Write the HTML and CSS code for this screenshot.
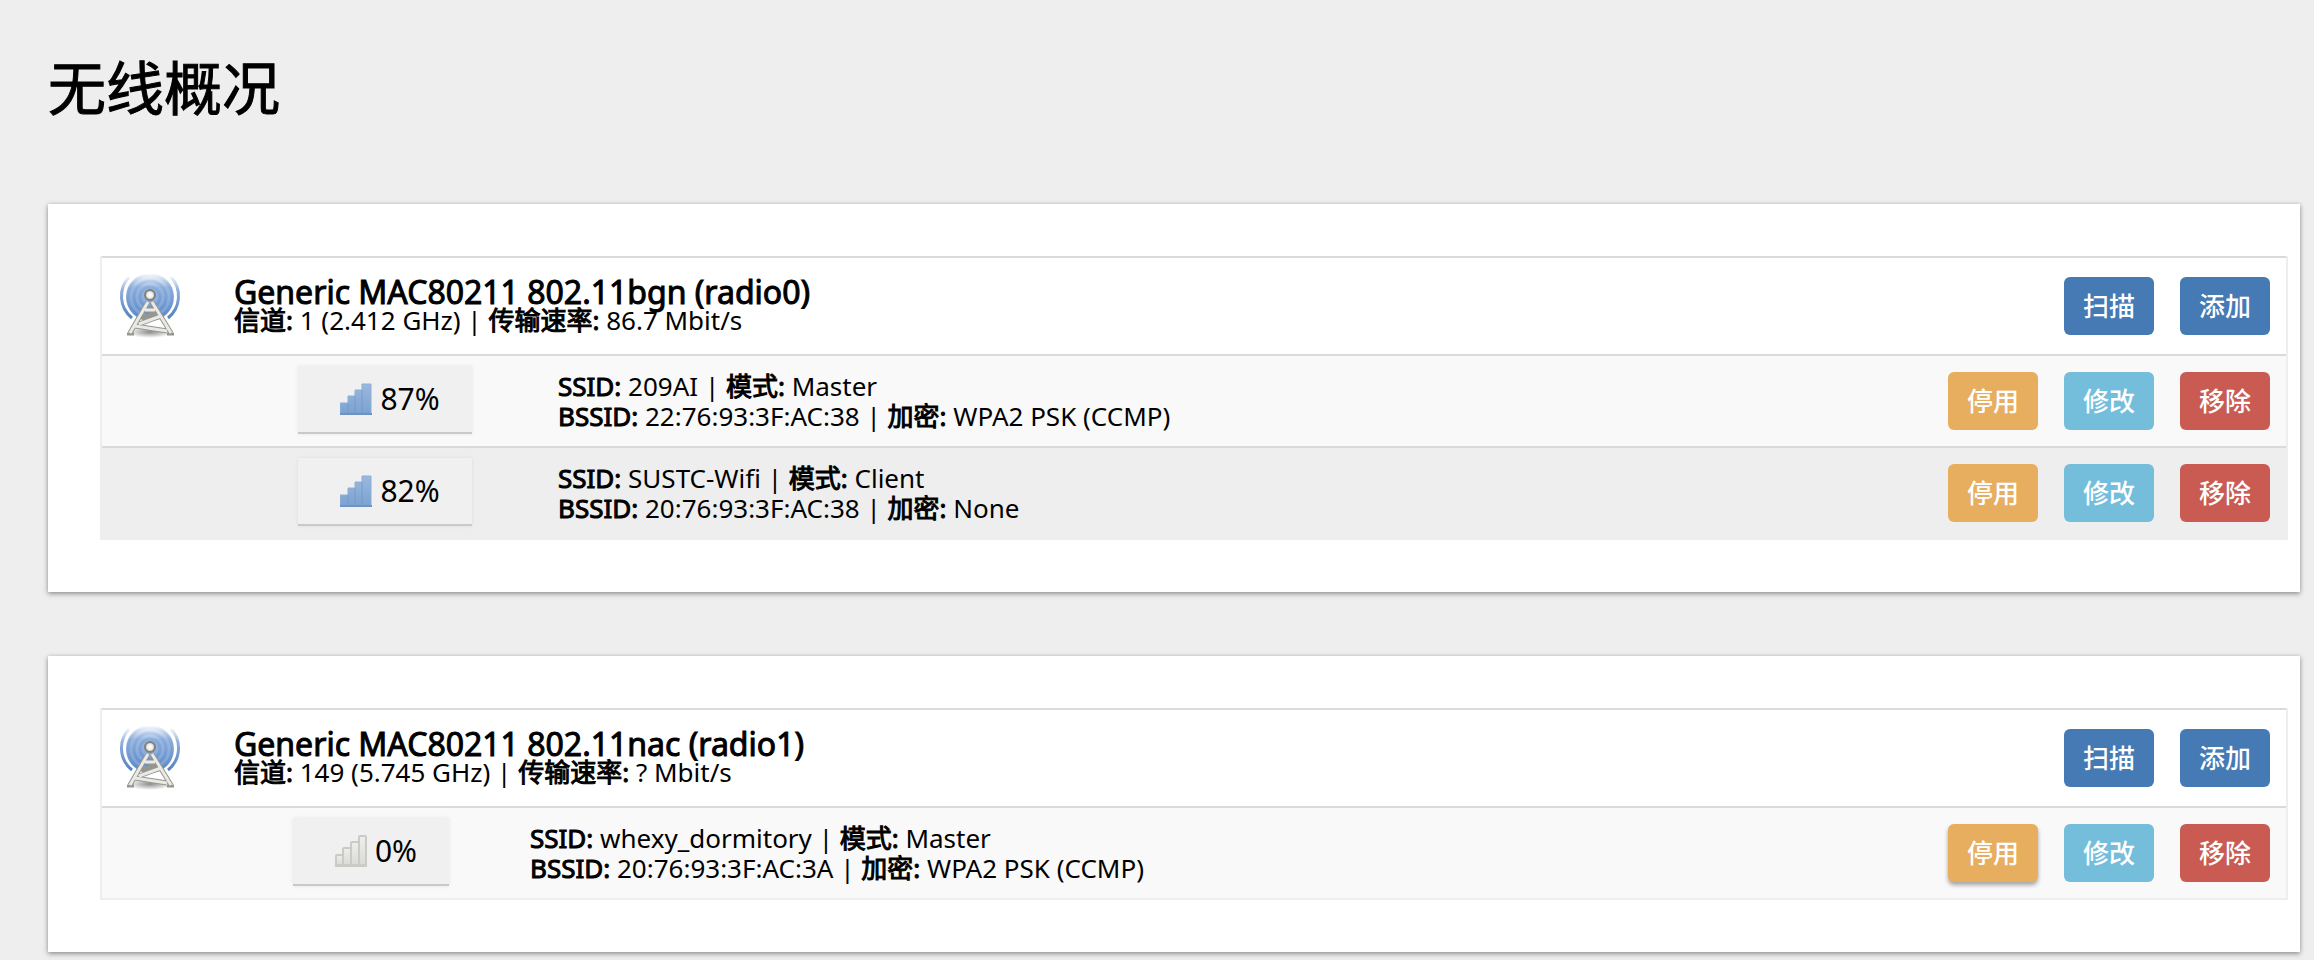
FILE: index.html
```
<!DOCTYPE html>
<html lang="zh-CN">
<head>
<meta charset="utf-8">
<title>无线概况</title>
<link rel="stylesheet" href="styles.css">
</head>
<body>
<svg class="defs" aria-hidden="true">
  <defs>
    <linearGradient id="wave" gradientUnits="userSpaceOnUse" x1="0" y1="0" x2="0" y2="46">
      <stop offset="0" stop-color="#8fb0dc" stop-opacity="0"/>
      <stop offset=".35" stop-color="#7ba0d4" stop-opacity=".85"/>
      <stop offset="1" stop-color="#4f7dbf"/>
    </linearGradient>
    <linearGradient id="haze" x1="0" y1="0" x2="0" y2="1">
      <stop offset="0" stop-color="#a9c3e6" stop-opacity="0"/>
      <stop offset=".3" stop-color="#95b5e0" stop-opacity=".95"/>
      <stop offset="1" stop-color="#7199d3"/>
    </linearGradient>
    <radialGradient id="ball">
      <stop offset="0" stop-color="#fff"/>
      <stop offset=".5" stop-color="#f2f2f0"/>
      <stop offset="1" stop-color="#b4b4b0"/>
    </radialGradient>
    <radialGradient id="ground">
      <stop offset="0" stop-color="#000" stop-opacity=".45"/>
      <stop offset="1" stop-color="#000" stop-opacity="0"/>
    </radialGradient>
    <linearGradient id="bar-on" x1="0" y1="0" x2="0" y2="1">
      <stop offset="0" stop-color="#9ab8de"/>
      <stop offset="1" stop-color="#7ba2d0"/>
    </linearGradient>
    <linearGradient id="bar-off" x1="0" y1="0" x2="0" y2="1">
      <stop offset="0" stop-color="#eeeeec"/>
      <stop offset="1" stop-color="#d9dbd6"/>
    </linearGradient>
    <symbol id="tower" viewBox="0 0 64 64">
      <circle cx="32" cy="23" r="24" fill="url(#haze)"/>
      <g fill="none" stroke="url(#wave)" stroke-width="3">
        <path d="M11 3A28 28 0 0 0 14 44M53 3A28 28 0 0 1 50 44"/>
        <circle cx="32" cy="23" r="22" opacity=".7"/>
        <circle cx="32" cy="23" r="16" opacity=".7"/>
        <circle cx="32" cy="23" r="10" opacity=".7"/>
      </g>
      <ellipse cx="32" cy="58" rx="23" ry="6" fill="url(#ground)"/>
      <g fill="none" stroke="#96968f" stroke-width="5">
        <path d="M30 28L12 59M34 28L53 59M27 36H37M24 45L39 38M21 50L43 42M17 52L49 57"/>
        <path d="M9 60H16M49 60H56" stroke-width="3"/>
      </g>
      <path d="M30 28L12 59M34 28L53 59M27 36H37M21 50L43 42M17 52L49 57" fill="none" stroke="#e9e9e5" stroke-width="3"/>
      <circle cx="32" cy="21" r="5" fill="url(#ball)" stroke="#80807c" stroke-width="2"/>
    </symbol>
    <symbol id="signal-on" viewBox="0 0 32 32">
      <path d="M0 20H8V13H15V7H22V1H31V31H0Z" fill="url(#bar-on)" stroke="#8eafd9" stroke-width="1"/>
      <path d="M8 20V31M15 13V31M22 7V31" stroke="#7095c8" stroke-width="1" opacity=".7"/>
      <rect x="0" y="30" width="32" height="2" fill="#6d93c6"/>
    </symbol>
    <symbol id="signal-off" viewBox="0 0 32 32">
      <rect x="0" y="29" width="32" height="3" fill="#c8cac4"/>
      <g fill="url(#bar-off)" stroke="#cacbc7" stroke-width="2">
        <rect x="1" y="20" width="7" height="10" rx="1"/>
        <rect x="8" y="13" width="8" height="17" rx="1"/>
        <rect x="16" y="7" width="8" height="23" rx="1"/>
        <rect x="24" y="1" width="7" height="29" rx="1"/>
      </g>
    </symbol>
  </defs>
</svg>
<main class="page">
  <h1 class="page-title">无线概况</h1>

  <section class="card">
    <table class="radio">
      <colgroup><col class="col-icon"><col class="col-signal"><col><col class="col-actions"></colgroup>
      <tr class="row row-head">
        <td class="icon-cell"><svg class="tower"><use href="#tower"/></svg></td>
        <td colspan="2">
          <div class="device"><div class="device-name">Generic MAC80211 802.11bgn (radio0)</div>
          <div><b>信道:</b> 1 (2.412 GHz) | <b>传输速率:</b> 86.7 Mbit/s</div></div>
        </td>
        <td><div class="actions"><button class="btn btn-primary">扫描</button><button class="btn btn-primary">添加</button></div></td>
      </tr>
      <tr class="row row-light">
        <td></td>
        <td class="signal-cell"><span class="badge"><svg class="bars"><use href="#signal-on"/></svg>87%</span></td>
        <td><div class="network"><div><b>SSID:</b> 209AI | <b>模式:</b> Master</div><div><b>BSSID:</b> 22:76:93:3F:AC:38 | <b>加密:</b> WPA2 PSK (CCMP)</div></div></td>
        <td><div class="actions"><button class="btn btn-warn">停用</button><button class="btn btn-info">修改</button><button class="btn btn-danger">移除</button></div></td>
      </tr>
      <tr class="row row-dark">
        <td></td>
        <td class="signal-cell"><span class="badge"><svg class="bars"><use href="#signal-on"/></svg>82%</span></td>
        <td><div class="network"><div><b>SSID:</b> SUSTC-Wifi | <b>模式:</b> Client</div><div><b>BSSID:</b> 20:76:93:3F:AC:38 | <b>加密:</b> None</div></div></td>
        <td><div class="actions"><button class="btn btn-warn">停用</button><button class="btn btn-info">修改</button><button class="btn btn-danger">移除</button></div></td>
      </tr>
    </table>
  </section>

  <section class="card">
    <table class="radio">
      <colgroup><col class="col-icon"><col class="col-signal-narrow"><col><col class="col-actions"></colgroup>
      <tr class="row row-head">
        <td class="icon-cell"><svg class="tower"><use href="#tower"/></svg></td>
        <td colspan="2">
          <div class="device"><div class="device-name">Generic MAC80211 802.11nac (radio1)</div>
          <div><b>信道:</b> 149 (5.745 GHz) | <b>传输速率:</b> ? Mbit/s</div></div>
        </td>
        <td><div class="actions"><button class="btn btn-primary">扫描</button><button class="btn btn-primary">添加</button></div></td>
      </tr>
      <tr class="row row-light">
        <td></td>
        <td class="signal-cell"><span class="badge"><svg class="bars"><use href="#signal-off"/></svg>0%</span></td>
        <td><div class="network"><div><b>SSID:</b> whexy_dormitory | <b>模式:</b> Master</div><div><b>BSSID:</b> 20:76:93:3F:AC:3A | <b>加密:</b> WPA2 PSK (CCMP)</div></div></td>
        <td><div class="actions"><button class="btn btn-warn btn-raised">停用</button><button class="btn btn-info">修改</button><button class="btn btn-danger">移除</button></div></td>
      </tr>
    </table>
  </section>
</main>
</body>
</html>
```
FILE: styles.css
```
* { box-sizing: border-box; }

body {
  margin: 0;
  background: #eee;
  color: #000;
  font-family: "Noto Sans", "Noto Sans CJK SC", sans-serif;
  font-size: 26px;
  line-height: 30px;
}

.defs { position: absolute; width: 0; height: 0; }

.page {
  display: flex;
  flex-direction: column;
  padding: 48px 14px 8px 48px;
}

.page-title {
  margin: 0 0 76px;
  font-size: 58px;
  font-weight: 400;
  line-height: 80px;
  -webkit-text-stroke: 1px #000;
}

.card {
  padding: 52px 12px 52px 52px;
  background: #fff;
  box-shadow: 0 2px 5px rgba(0, 0, 0, .35), 0 0 4px rgba(0, 0, 0, .12);
}

.card + .card { margin-top: 64px; }

.radio {
  width: 100%;
  table-layout: fixed;
  border-collapse: separate;
  border-spacing: 0;
  border-right: 2px solid #eee;
  border-bottom: 2px solid #eee;
  border-left: 2px solid #eee;
}

.col-icon { width: 132px; }
.col-signal { width: 324px; }
.col-signal-narrow { width: 296px; }
.col-actions { width: 340px; }

td {
  height: 92px;
  padding: 0;
  border-top: 2px solid #dadada;
  vertical-align: middle;
}

.row-head td { height: 98px; }
.row-light { background: #f9f9f9; }
.row-dark { background: #eee; }

.icon-cell { padding-left: 16px; }
.tower { display: block; width: 64px; height: 64px; }

.device { line-height: 28px; }
.device-name {
  font-size: 32px;
  -webkit-text-stroke: 1px #000;
}

b {
  font-weight: 400;
  -webkit-text-stroke: 1px #000;
}

.signal-cell {
  padding: 0 22px 2px 0;
  text-align: center;
}

.badge {
  display: inline-flex;
  align-items: center;
  gap: 8px;
  height: 68px;
  padding: 0 32px 0 42px;
  border-bottom: 2px solid #c9c9c9;
  background: #f0f0f0;
  box-shadow: 0 0 4px rgba(0, 0, 0, .08);
  font-size: 30px;
  vertical-align: middle;
}

.bars { width: 32px; height: 32px; }

.actions {
  display: flex;
  justify-content: flex-end;
  gap: 26px;
  padding-right: 16px;
}

.btn {
  width: 90px;
  height: 58px;
  padding: 0;
  border: 0;
  border-radius: 6px;
  color: #fff;
  font: inherit;
  font-weight: 500;
}

.btn-primary { background: #457ab4; }
.btn-warn { background: #e8ae5f; }
.btn-info { background: #74bddb; }
.btn-danger { background: #ca5b52; }
.btn-raised { box-shadow: 0 3px 4px rgba(0, 0, 0, .35); }
```
